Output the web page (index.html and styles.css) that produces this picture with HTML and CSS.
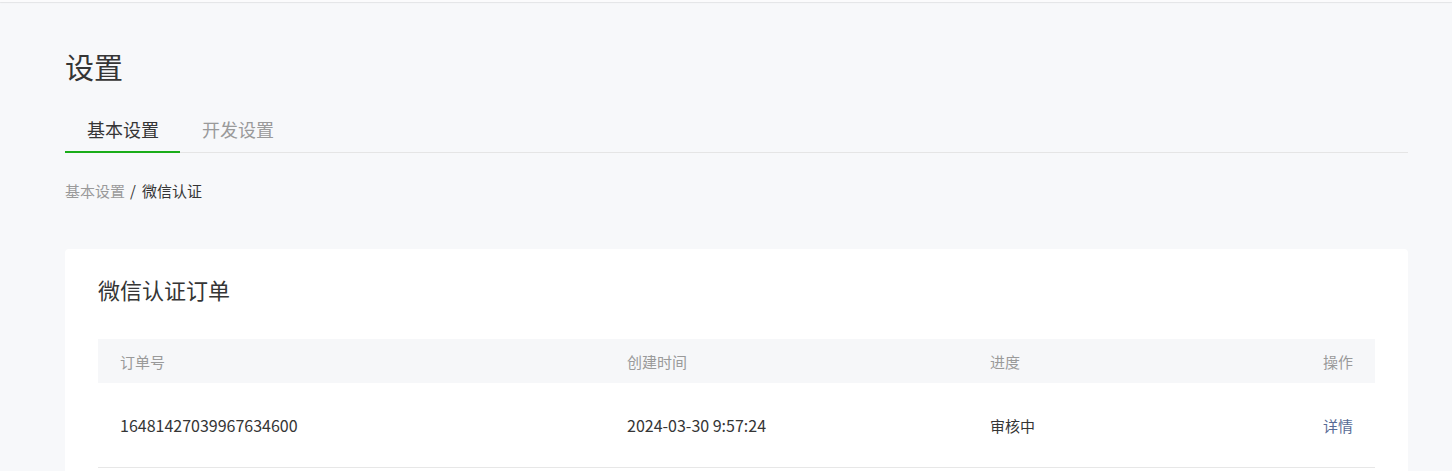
FILE: index.html
```html
<!DOCTYPE html>
<html lang="zh">
<head>
<meta charset="utf-8">
<link rel="stylesheet" href="styles.css">
</head>
<body>
<div class="topbar"></div>
<main class="page">
  <h1 class="title">设置</h1>
  <nav class="tabs">
    <div class="tab active">基本设置</div>
    <div class="tab">开发设置</div>
  </nav>
  <div class="crumbs"><span class="crumb-link">基本设置</span><span class="sep">/</span>微信认证</div>
  <section class="card">
    <h2 class="card-title">微信认证订单</h2>
    <div class="table">
      <div class="row head">
        <div class="cell">订单号</div>
        <div class="cell">创建时间</div>
        <div class="cell">进度</div>
        <div class="cell right">操作</div>
      </div>
      <div class="row body">
        <div class="cell num">16481427039967634600</div>
        <div class="cell num">2024-03-30 9:57:24</div>
        <div class="cell">审核中</div>
        <div class="cell right"><a class="link">详情</a></div>
      </div>
    </div>
  </section>
</main>
</body>
</html>
```
FILE: styles.css
```css
html, body {
  margin: 0;
  padding: 0;
  background: #f7f8fa;
  font-family: "Noto Sans CJK SC", "Noto Sans", sans-serif;
  color: #353535;
  overflow: hidden;
}
.topbar {
  height: 2px;
  background: #fbfbfc;
  box-shadow: 0 1px 1px rgba(0,0,0,0.08);
}
.page {
  padding: 0 44px 0 65px;
}
.title {
  margin: 0;
  padding-top: 44px;
  font-size: 29px;
  line-height: 40px;
  font-weight: 400;
  color: #353535;
}
.tabs {
  display: flex;
  margin-top: 26px;
  border-bottom: 1px solid #e5e5e5;
}
.tab {
  box-sizing: border-box;
  height: 41px;
  line-height: 35px;
  padding: 0 21px 0 22px;
  font-size: 18px;
  color: #9a9a9a;
  margin-bottom: -1px;
  border-bottom: 2px solid transparent;
}
.tab.active {
  color: #353535;
  border-bottom-color: #1aad19;
}
.crumbs {
  margin-top: 28px;
  font-size: 15px;
  line-height: 20px;
  color: #353535;
}
.crumb-link {
  color: #9a9a9a;
}
.sep {
  padding: 0 6px 0 5px;
}
.card {
  margin-top: 48px;
  background: #fff;
  border-radius: 4px;
  padding: 24px 33px 0;
  height: 300px;
}
.card-title {
  margin: 0;
  font-size: 22px;
  line-height: 32px;
  font-weight: 400;
  color: #353535;
}
.table {
  margin-top: 34px;
}
.row {
  display: grid;
  grid-template-columns: 507px 363px 1fr auto;
  align-items: center;
  font-size: 15px;
}
.row.head {
  height: 44px;
  background: #f6f7f9;
  color: #9a9a9a;
}
.row.body {
  height: 84px;
  border-bottom: 1px solid #e7e7e7;
  color: #353535;
}
.cell {
  padding-left: 22px;
}
.cell.right {
  padding: 0 22px 0 0;
  text-align: right;
}
.num {
  font-size: 16px;
}
.link {
  color: #576b95;
  text-decoration: none;
}
```
